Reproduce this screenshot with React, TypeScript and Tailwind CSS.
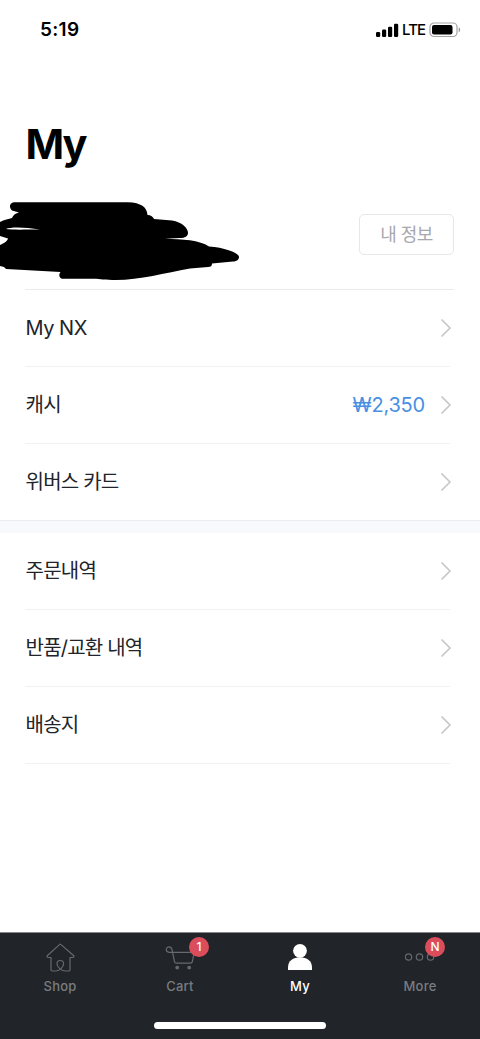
import type { ReactNode } from 'react'
import { clsx } from 'clsx'

type MenuItem = {
  label: string
  value?: string
  latin?: boolean
}

type Tab = {
  label: string
  icon: ReactNode
  active?: boolean
  badge?: string
  badgeClass?: string
}

const accountItems: MenuItem[] = [
  { label: 'My NX', latin: true },
  { label: '캐시', value: '₩2,350' },
  { label: '위버스 카드' },
]

const orderItems: MenuItem[] = [
  { label: '주문내역' },
  { label: '반품/교환 내역' },
  { label: '배송지' },
]

const tabs: Tab[] = [
  { label: 'Shop', icon: <ShopIcon /> },
  { label: 'Cart', icon: <CartIcon />, badge: '1', badgeClass: 'left-[69px]' },
  { label: 'My', icon: <PersonIcon />, active: true },
  { label: 'More', icon: <MoreIcon />, badge: 'N', badgeClass: 'left-[65px]' },
]

function ShopIcon() {
  return (
    <svg width="30" height="30" viewBox="0 0 30 30" fill="none" stroke="#66696d" strokeWidth="1.2" strokeLinejoin="round" strokeLinecap="round">
      <path d="M14.5 1.6Q15.300.8 16.100 1.600L28.500 12.500C29.300 13.300 28.800 14.500 27.800 14.500H25V26.800Q25 28 23.800 28H20.500C16.500 28 12 24 12 20.800C12 18.800 13.500 17.500 15.300 17.500S18.600 18.800 18.600 20.800C18.600 24 14.500 28 10.500 28H7.200Q6 28 6 26.800V14.500H3.200C2.200 14.500 1.700 13.300 2.500 12.500Z" />
    </svg>
  )
}

function CartIcon() {
  return (
    <svg width="30" height="30" viewBox="0 0 30 30" fill="none" stroke="#66696d" strokeWidth="1.2" strokeLinejoin="round" strokeLinecap="round">
      <path d="M28.500 9.300H4C2.200 9.300 1.300 8.100 1.300 6.600S2.500 3.800 4.100 3.800C5.900 3.800 6.700 5.100 7.100 6.800L9.400 18.300Q9.800 20.100 11.300 20.100H25.500Q27 20.100 27.400 18.500L28.800 11.300" />
      <circle cx="12.200" cy="24.600" r="1.300" fill="#66696d" />
      <circle cx="24.200" cy="24.600" r="1.300" fill="#66696d" />
    </svg>
  )
}

function PersonIcon() {
  return (
    <svg width="30" height="30" viewBox="0 0 30 30" fill="#fff">
      <circle cx="15" cy="7.800" r="6.900" />
      <path d="M3 27v-2.500C3 18 8 14.300 15 14.300S27 18 27 24.500V27Z" />
    </svg>
  )
}

function MoreIcon() {
  return (
    <svg width="30" height="30" viewBox="0 0 30 30" fill="none" stroke="#66696d" strokeWidth="1.2">
      <circle cx="3.500" cy="14" r="3.200" />
      <circle cx="14.500" cy="14" r="3.200" />
      <circle cx="25.500" cy="14" r="3.200" />
    </svg>
  )
}

function Chevron() {
  return (
    <svg width="12" height="20" viewBox="0 0 12 20" fill="none" stroke="#c6c6c9" strokeWidth="1.6">
      <path d="m1.500 1.500 8.500 8.500-8.500 8.500" />
    </svg>
  )
}

function StatusBar() {
  return (
    <header className="flex h-[60px] items-center justify-between pr-[18px] pl-10">
      <span className="pt-px text-[19px] font-semibold tracking-[0.3px]">5:19</span>
      <div className="flex items-center">
        <svg width="23" height="15" viewBox="0 0 23 15" fill="#000">
          <rect x="0" y="9" width="4.200" height="5" rx="1.200" />
          <rect x="6" y="6.500" width="4.200" height="7.500" rx="1.200" />
          <rect x="12" y="3.800" width="4.200" height="10.200" rx="1.200" />
          <rect x="18" y="0.700" width="4.200" height="13.300" rx="1.200" />
        </svg>
        <span className="ml-[3px] w-[25px] pt-px text-[15px] font-medium tracking-[-0.9px]">LTE</span>
        <svg className="ml-[2px] mr-px" width="32" height="16" viewBox="0 0 32 16">
          <rect x="1" y="1" width="27" height="13.500" rx="4" fill="none" stroke="#a3a3a3" strokeWidth="1.2" />
          <rect x="3" y="3" width="20.500" height="9.500" rx="2" fill="#000" />
          <path d="M29.700 5.300c2 .8 2 4.100 0 4.900Z" fill="#999" />
        </svg>
      </div>
    </header>
  )
}

function Profile() {
  return (
    <div className="flex h-[99px] justify-between pr-[26px]">
      <svg width="250" height="99" viewBox="0 190 250 99">
        <path
          fillRule="evenodd"
          d="M14 202.300H128C141 202.800 147 207 147.500 215C151 215 153 217 154 219L172 220.500C182 222 188 228 188 233C188 236 185 238 180 238L165 238.700C182 239 200 240 209 246.500C225 247.500 239 253 239 257C239 260 236 261.500 233 261.500L212 263.500C212 266 211 267 208 267L190 268.500C165 273 140 280 116 280C105 280 100 278.700 94 278.700H62C59 278 58.500 274 60.500 272L6 269L4 267L0 266V245C3 243.500 7 242 8 238.500L0 236V222C4 219.500 9 219 12 218C13 215 16 213 19 212.500L12 210.500C9 208 9 203 14 202.300ZM6 229C10 226.800 25 227 40 229.500C25 229.500 12 230 6 229Z"
        />
      </svg>
      <button className="mt-6 h-[41px] w-[95px] rounded-[5px] border border-[#e7e7ea] pb-px text-[18px] tracking-[-0.6px] text-[#a7a8ae]">
        내 정보
      </button>
    </div>
  )
}

function MenuRow({ item, last }: { item: MenuItem; last?: boolean }) {
  return (
    <li className={clsx('mr-[30px] ml-[25px] flex h-[77px] items-center justify-between border-b', last ? 'border-transparent' : 'border-[#f1f1f3]')}>
      <span className={clsx('pb-px pl-[0.6px]', item.latin && 'tracking-[-0.5px]')}>{item.label}</span>
      <div className="-mr-[2px] flex items-center gap-[15px]">
        {item.value && <span className="pb-px tracking-[-0.2px] text-[#4a90e2]">{item.value}</span>}
        <Chevron />
      </div>
    </li>
  )
}

function TabItem({ tab }: { tab: Tab }) {
  return (
    <a className={clsx('relative flex flex-1 flex-col items-center pt-[10px]', tab.active ? 'text-white' : 'text-[#797c80]')}>
      {tab.icon}
      <span className="mt-[4px] text-[13px] leading-[18px] font-medium tracking-[0.2px]">{tab.label}</span>
      {tab.badge && (
        <span className={clsx('absolute top-[4px] flex size-[20px] items-center justify-center rounded-full bg-[#dc4d5c] text-[12px] font-medium text-white', tab.badgeClass)}>
          {tab.badge}
        </span>
      )}
    </a>
  )
}

export default function App() {
  return (
    <div className="flex h-[1039px] w-[480px] flex-col overflow-hidden bg-white font-['Inter','Noto_Sans_CJK_KR',sans-serif] text-black">
      <StatusBar />
      <h1 className="h-[130px] pt-[58px] pl-[25.500px] text-[41.500px] leading-[52px] font-bold tracking-[-2.200px]">My</h1>
      <Profile />
      <main className="flex-1 text-[20px] tracking-[-0.8px] text-[#212429]">
        <div className="mr-[26px] ml-[25px] h-px bg-[#ebebed]" />
        <ul>
          {accountItems.map((item, i) => (
            <MenuRow key={item.label} item={item} last={i === accountItems.length - 1} />
          ))}
        </ul>
        <div className="-mt-px h-[13px] border-t border-[#ebecee] bg-[#f8f9fc]" />
        <ul>
          {orderItems.map((item) => (
            <MenuRow key={item.label} item={item} />
          ))}
        </ul>
      </main>
      <nav className="flex h-[107px] flex-col items-center border-t border-[#85878a] bg-[#212429]">
        <div className="flex w-full flex-1">
          {tabs.map((tab) => (
            <TabItem key={tab.label} tab={tab} />
          ))}
        </div>
        <div className="mb-[10px] h-[7px] w-[172px] rounded-full bg-white" />
      </nav>
    </div>
  )
}
